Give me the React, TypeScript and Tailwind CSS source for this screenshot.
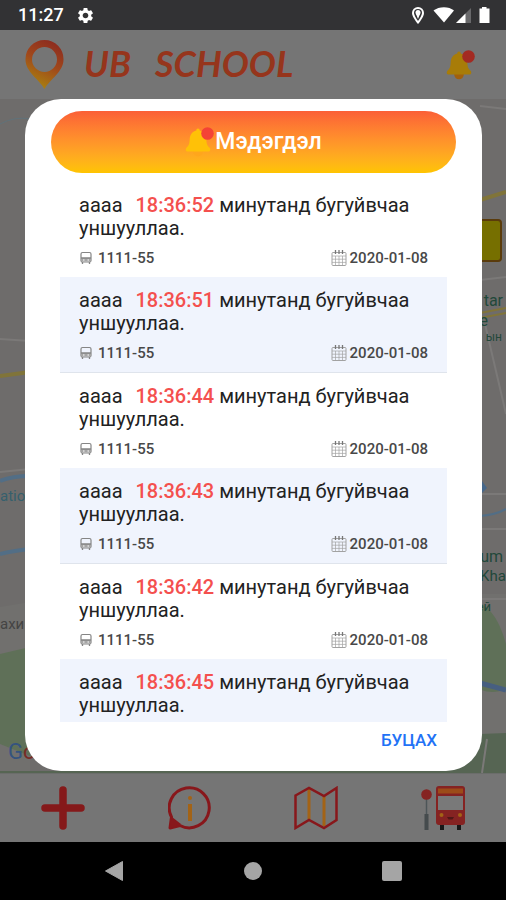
import { MdSettings } from "react-icons/md";

const notifications = [
  { time: "18:36:52", bus: "1111-55", date: "2020-01-08" },
  { time: "18:36:51", bus: "1111-55", date: "2020-01-08" },
  { time: "18:36:44", bus: "1111-55", date: "2020-01-08" },
  { time: "18:36:43", bus: "1111-55", date: "2020-01-08" },
  { time: "18:36:42", bus: "1111-55", date: "2020-01-08" },
  { time: "18:36:45", bus: "1111-55", date: "2020-01-08" },
];

function Bell({ body, clapper, dot, className }: { body: string; clapper: string; dot: string; className: string }) {
  return (
    <svg viewBox="0 0 30 30" className={className} aria-hidden="true">
      <circle cx="13" cy="24.500" r="4.800" fill={clapper} />
      <path
        d="M13 1.500c-1.200 0-1.700.8-1.700 2C7 4.500 5 8 4.700 12c-.3 5-.7 6.500-3.500 9-.8 1-.5 3.500.8 3.500h22c1.300 0 1.600-2.500.8-3.500-2.800-2.500-3.200-4-3.500-9C21 8 19 4.500 14.700 3.500c0-1.200-.5-2-1.700-2z"
        fill={body}
      />
      <circle cx="22.500" cy="6.500" r="6.300" fill={dot} />
    </svg>
  );
}

function BusIcon() {
  return (
    <svg viewBox="0 0 14 14" className="size-[14px]" fill="none" stroke="#858585" aria-hidden="true">
      <rect x="2" y="1.500" width="10" height="9.500" rx="1.500" strokeWidth="1.200" />
      <path d="M2 7h10v3.500H2z" fill="#a5a5a5" stroke="none" />
      <path d="M2 7h10M3.500 11v2M10.500 11v2" strokeWidth="1.300" />
      <path d="M4 9h1.500M8.500 9H10" stroke="#fff" />
    </svg>
  );
}

function Calendar() {
  return (
    <svg viewBox="0 0 16 16" className="size-4" fill="none" stroke="#a2a2a2" aria-hidden="true">
      <rect x="1" y="2.500" width="14" height="13" rx="1" />
      <path d="M1 6h14M1 9.200h14M1 12.400h14M4.500 6v9.500M8 6v9.500M11.500 6v9.500" strokeWidth=".7" />
      <path d="M4.500 0v4M8 0v4M11.500 0v4" stroke="#777" strokeWidth="1.300" />
    </svg>
  );
}

function StatusBar() {
  return (
    <div className="flex h-[30px] shrink-0 items-center justify-between bg-[#323234] pr-[14px] pl-[18px] text-white">
      <div className="flex items-center gap-3">
        <span className="text-lg leading-none font-medium">11:27</span>
        <MdSettings className="size-[19px]" />
      </div>
      <svg viewBox="0 0 80 20" className="h-5 w-20" fill="#fff" aria-hidden="true">
        <path d="M6 2a6 6 0 0 0-6 6c0 4.300 6 11 6 11s6-6.700 6-11a6 6 0 0 0-6-6z" />
        <path d="M6 4a4 4 0 0 0-4 4c0 2.500 4 8 4 8s4-5.500 4-8a4 4 0 0 0-4-4z" fill="#323234" />
        <circle cx="6" cy="7.500" r="2.500" />
        <path d="M4 9h4l-2 5z" />
        <path d="M21.500 5.500C27 1 37 1 42 5.500L32 17.500z" />
        <path d="M59 3v15H44z" fill="#68686a" />
        <path d="M53.500 8.500V18H44z" />
        <path d="M70 3.500V2h4.500v1.500h3V18h-10V3.500z" />
      </svg>
    </div>
  );
}

function Header() {
  return (
    <header className="flex h-[69px] shrink-0 items-center justify-between bg-[#757575] pr-[30px] pl-[25px]">
      <h1 className="flex items-center gap-5 text-4xl leading-none font-bold text-[#96351c] italic">
        <svg viewBox="0 0 39 49" className="h-[49px] w-[39px]" aria-hidden="true">
          <defs>
            <linearGradient id="pin" x1=".8" y1="0" x2=".4" y2="1">
              <stop offset="0" stopColor="#8b2920" />
              <stop offset=".5" stopColor="#a0481b" />
              <stop offset="1" stopColor="#a98210" />
            </linearGradient>
          </defs>
          <path
            d="M19.500 0A19 19 0 0 0 .5 19.500C.5 32 14 39 19.500 49 25 39 38.500 32 38.500 19.500A19 19 0 0 0 19.500 0zm0 7a12.500 12.500 0 1 1 0 25 12.500 12.500 0 0 1 0-25z"
            fill="url(#pin)"
            fillRule="evenodd"
          />
        </svg>
        <span className="flex gap-6 pb-1 font-['Lato',sans-serif]">
          <span>UB</span>
          <span>SCHOOL</span>
        </span>
      </h1>
      <button aria-label="Мэдэгдэл">
        <Bell className="size-[30px]" body="#a87c08" clapper="#a2600c" dot="#a32a22" />
      </button>
    </header>
  );
}

function MapBackground() {
  return (
    <svg
      viewBox="0 0 506 674"
      preserveAspectRatio="xMidYMid slice"
      className="absolute inset-0 size-full bg-[#6e6c6b]"
      fill="none"
      aria-hidden="true"
    >
      <path d="M0 508 30 503V674H0zM470 495h36v179h-36z" fill="#71706e" />
      <path d="M0 555 30 548V657L0 645z" fill="#5f7058" />
      <path d="M470 500c18 5 28 17 36 45v45c-12 5-24 4-36-6z" fill="#5f7058" />
      <path d="M0 672h440l40-37 26-1v40H0z" fill="#566553" />
      <path d="M0 25q15-8 30-5" stroke="#60727a" />
      <path
        d="M0 240l30 2M0 373l30-3M480 7l26 3M480 181l26-3M485 225l21 90M480 395h26M480 430h26M480 500h26M487 640l-5 34"
        stroke="#7b7978"
        strokeWidth="2"
      />
      <path d="M0 277 30 273M480 101l26-8" stroke="#80743a" strokeWidth="4" />
      <path d="M480 214l26-5M480 219l26-5" stroke="#80743a" strokeWidth="2" />
      <path d="M0 382q12-5 30-5M0 455q12-3 30-5" stroke="#526e86" strokeWidth="4" />
      <path d="M480 417q15-1 26-7" stroke="#526e86" strokeWidth="2" />
      <path d="M480 584l26 7" stroke="#475f80" strokeWidth="5" />
      <path d="m482 382 5 7-5 5z" fill="#46678a" />
      <rect x="472" y="121" width="29" height="41" rx="3" fill="#766f00" stroke="#5a3b0b" strokeWidth="2" />
      <g fontFamily="Roboto, sans-serif" fontSize="15">
        <text x="0" y="402" fill="#35606d">atio</text>
        <text x="0" y="530" fill="#444">ахи</text>
        <g fill="#22483a">
          <text x="503" y="207" textAnchor="end" fontSize="16">tar</text>
          <text x="488" y="227" textAnchor="end" fontSize="16">e</text>
          <text x="502" y="242" textAnchor="end" fontSize="12">ын</text>
          <text x="503" y="463" textAnchor="end" fontSize="16">um</text>
          <text x="480" y="482">Kha</text>
          <text x="491" y="512" textAnchor="end" fontSize="13">ей</text>
        </g>
      </g>
      <text x="8" y="660" fontFamily="Roboto, sans-serif" fontSize="22">
        <tspan fill="#34537f">G</tspan>
        <tspan fill="#782b25">o</tspan>
      </text>
    </svg>
  );
}

function NotificationModal() {
  return (
    <section
      role="dialog"
      aria-labelledby="modal-title"
      className="relative mr-6 mb-[2px] ml-[25px] flex min-h-0 flex-1 flex-col rounded-[36px] bg-white px-[26px] pt-3 pb-3"
    >
      <div className="flex h-[62px] shrink-0 items-center justify-center rounded-full bg-linear-to-b from-[#fb5f36] to-[#ffc400] text-white">
        <Bell className="size-[30px]" body="#ffc107" clapper="#ffa61c" dot="#f44336" />
        <h2 id="modal-title" className="text-[23px] font-medium">Мэдэгдэл</h2>
      </div>

      <ul className="mx-[9px] mt-[9px] min-h-0 flex-1 overflow-hidden">
        {notifications.map((item) => (
          <li
            key={item.time}
            className="px-[19px] pt-3 pb-[9px] even:border-b even:border-[#dfe4ec] even:bg-[#f0f4fd]"
          >
            <p className="text-xl leading-[23px] text-[#222]">
              аааа <span className="ml-2 font-medium text-[#f4504e]">{item.time}</span> минутанд бугуйвчаа уншууллаа.
            </p>
            <div className="mt-2 flex h-5 items-center justify-between text-[15px] font-medium text-[#484848]">
              <span className="flex items-center gap-[5px]">
                <BusIcon />
                {item.bus}
              </span>
              <span className="flex items-center gap-[3px]">
                <Calendar />
                {item.date}
              </span>
            </div>
          </li>
        ))}
      </ul>

      <div className="flex h-[37px] shrink-0 items-center justify-end pr-[19px]">
        <button className="text-[17px] font-medium text-[#2272f6]">БУЦАХ</button>
      </div>
    </section>
  );
}

function TabBar() {
  return (
    <nav className="grid h-[69px] shrink-0 grid-cols-4 items-center justify-items-center border-t border-[#6b6d6b] bg-[#757575]">
      <button aria-label="Нэмэх">
        <svg viewBox="0 0 44 44" className="size-11">
          <path d="M22 4v36M4 22h36" stroke="#85191a" strokeWidth="7.500" strokeLinecap="round" />
        </svg>
      </button>
      <button aria-label="Мэдээлэл">
        <svg viewBox="0 0 44 44" className="size-11" fill="none">
          <path d="M3.500 31A20 20 0 1 1 12 39.500L2 42z" stroke="#88171b" strokeWidth="3" strokeLinejoin="round" />
          <path d="M4 31 13 38 1 43z" fill="#88171b" />
          <path d="M22 18v17" stroke="#a36316" strokeWidth="4" />
          <circle cx="22" cy="12" r="2" fill="#a36316" />
        </svg>
      </button>
      <button aria-label="Газрын зураг">
        <svg viewBox="0 0 44 44" className="size-11" fill="none">
          <path d="M15 3v30M30 10v30" stroke="#a36316" strokeWidth="3" />
          <path d="M1.500 9.500 15 2l15 8 12.500-8v32L30 42 15 34 1.500 42z" stroke="#88171b" strokeWidth="2.500" />
        </svg>
      </button>
      <button aria-label="Автобус">
        <svg viewBox="0 0 44 44" className="size-11">
          <path d="M5.500 12v20" stroke="#4d5558" strokeWidth="1.500" />
          <path d="M3.500 28h4v16h-4z" fill="#454b4d" />
          <circle cx="5.500" cy="8.500" r="5.300" fill="#852322" />
          <path d="M19 36h4v8h-4zM36 36h4v8h-4z" fill="#171717" />
          <rect x="15" y="0" width="29" height="39" rx="3" fill="#852322" />
          <path d="M17 2.500h25v5H17z" fill="#9c4c19" />
          <path d="M17 10h25v14H17z" fill="#797979" />
          <circle cx="20.500" cy="29" r="2" fill="#a36316" />
          <circle cx="39" cy="29" r="2" fill="#a36316" />
          <path d="M26 31h7l-1.500 2.500h-4z" fill="#501716" />
        </svg>
      </button>
    </nav>
  );
}

function SystemNav() {
  return (
    <div className="flex h-[58px] shrink-0 items-center justify-center gap-[120px] bg-black">
      <button aria-label="Back">
        <svg viewBox="0 0 20 20" className="size-5" fill="#a5a5a5" stroke="#a5a5a5" strokeLinejoin="round">
          <path d="M18.500 0.500v19L1.500 10z" />
        </svg>
      </button>
      <button aria-label="Home" className="size-[18px] rounded-full bg-[#a5a5a5]" />
      <button aria-label="Recents" className="size-5 rounded-xs bg-[#a5a5a5]" />
    </div>
  );
}

export default function App() {
  return (
    <div className="flex h-screen flex-col bg-[#757575] font-['Roboto',sans-serif]">
      <StatusBar />
      <Header />
      <main className="relative flex min-h-0 flex-1 flex-col">
        <MapBackground />
        <NotificationModal />
      </main>
      <TabBar />
      <SystemNav />
    </div>
  );
}
